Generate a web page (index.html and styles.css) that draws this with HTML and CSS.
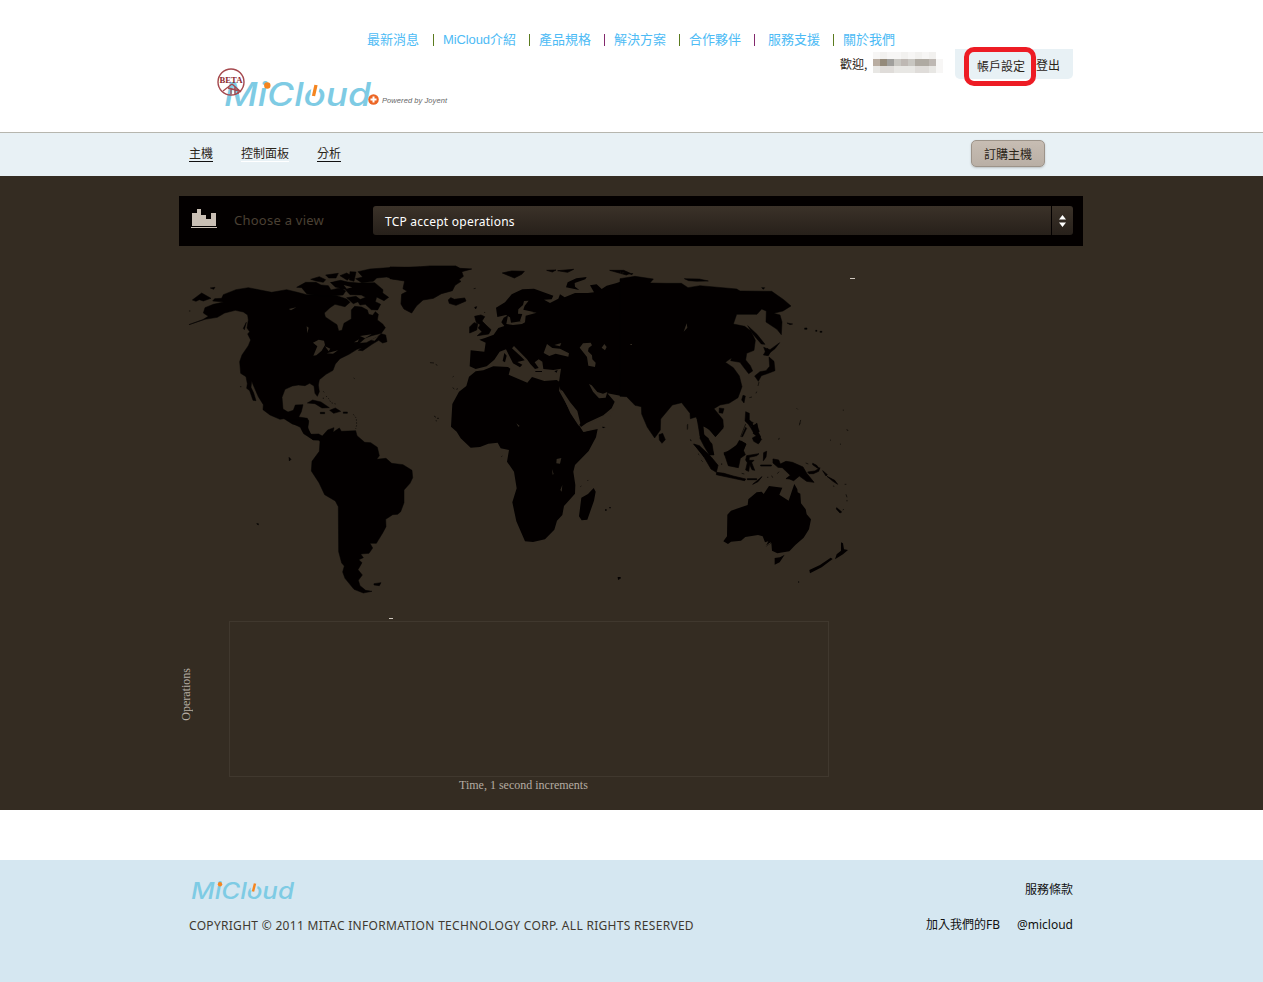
FILE: index.html
```html
<!DOCTYPE html>
<html lang="zh-Hant">
<head>
<meta charset="utf-8">
<title>MiCloud</title>
<link rel="stylesheet" href="styles.css">
</head>
<body>
<header class="header">
  <nav class="topnav">
    <a>最新消息</a><i></i><a class="intro">MiCloud介紹</a><i></i><a>產品規格</a><i class="purple"></i><a>解決方案</a><i></i><a>合作夥伴</a><i class="purple wide"></i><a>服務支援</a><i></i><a>關於我們</a>
  </nav>
  <div class="brand-row">
    <svg class="logo" width="236" height="48" viewBox="214 64 236 48">
      <text class="wordmark" x="224" y="105.500" font-size="32" textLength="147" lengthAdjust="spacingAndGlyphs">MiCloud</text>
      <g fill="none" stroke="#a5484e">
        <circle cx="231" cy="82" r="13" stroke-width="1.400"/>
        <path d="M232 84l-9 7M228 88l12 3M232 84l9 8M231 88v6M235 87v8M238 89v5" stroke-width="1.300"/>
      </g>
      <text x="219.500" y="82.500" font-size="8" font-weight="700" fill="#8c2930" font-family="Liberation Serif, serif" textLength="23" lengthAdjust="spacingAndGlyphs">BETA</text>
      <circle cx="267.300" cy="85.500" r="3.200" fill="#f5851f"/>
      <path d="M312 84L321 84L318 94L310.500 94Z" fill="#fff"/>
      <path d="M316 85L313.500 96" stroke="#f5851f" stroke-width="3.300"/>
      <circle cx="373.500" cy="99.500" r="5.300" fill="#ec6625"/>
      <path d="M370.500 99.500h6M373.500 96.500v6" stroke="#fff" stroke-width="2"/>
      <text x="382" y="103" font-size="7.500" font-style="italic" fill="#666" font-family="Liberation Sans, sans-serif" textLength="65">Powered by Joyent</text>
    </svg>
    <div class="welcome">歡迎,</div>
    <div class="mosaic">
      <b class="m1"></b><b class="m2"></b><b class="m1"></b><b class="m1"></b><b class="m2"></b><b class="m1"></b><b class="m2"></b><b class="m1"></b><b class="m2"></b><b></b>
      <b class="m5"></b><b class="m7"></b><b class="m6"></b><b class="m4"></b><b class="m5l"></b><b class="m4"></b><b class="m8"></b><b class="m8"></b><b class="m5l"></b><b class="m1"></b>
      <b class="m3"></b><b class="m3d"></b><b class="m3d"></b><b class="m3"></b><b class="m3"></b><b class="m3"></b><b class="m3d"></b><b class="m3d"></b><b class="m3"></b><b class="m1"></b>
    </div>
    <div class="account"><a>帳戶設定</a><a class="logout">登出</a><div class="marker"></div></div>
  </div>
</header>
<nav class="mainnav">
  <a class="line">主機</a><a class="line pale">控制面板</a><a class="line">分析</a>
  <button class="order">訂購主機</button>
</nav>
<main class="main">
  <div class="viewbar">
    <svg class="baricon" width="26" height="20" viewBox="0 0 26 20" fill="#c9bfb4" shape-rendering="crispEdges"><path d="M1 4h5V0h4v6h5v4h5V4h5v13H1zM0 18h26v1H0z"/></svg>
    <span class="choose">Choose a view</span>
    <div class="select"><span>TCP accept operations</span>
      <div class="stepper"><svg width="7" height="12" viewBox="0 0 7 12" fill="#fff"><path d="M3.500 0L7 4.500H0zM0 7.500h7L3.500 12z"/></svg></div>
    </div>
  </div>
  <div class="maprow">
    <svg class="map" width="671" height="350" viewBox="179 256 671 350">
      <!-- North America -->
      <g transform="translate(180 255) scale(.33333)">
        <path stroke="#030000" stroke-width="1.500" d="M27 209L68 194 85 184 70 174 75 158 100 148 132 141 98 138 104 131 125 130 130 119 168 104 205 98 240 105 275 112 320 104 352 112 380 119 430 118 470 122 500 132 510 142 495 155 465 148 450 158 433 174 436 186 457 200 471 209 476 228 486 226 492 205 514 192 514 165 524 154 545 156 562 165 566 178 578 181 586 170 595 178 592 195 608 207 616 218 604 235 575 242 556 249 538 265 559 263 592 246 604 236 617 240 621 260 608 264 596 256 576 268 548 287 535 286 546 278 531 283 507 298 480 311 466 327 459 346 438 358 418 374 415 390 418 410 412 424 405 415 402 393 389 385 375 392 355 390 337 393 315 403 306 427 309 462 324 471 340 466 346 450 369 449 364 470 356 486 382 490 386 500 383 522 393 539 408 542 416 540 424 556 400 555 382 540 368 529 362 513 337 507 312 491 300 493 270 480 249 464 250 449 235 425 221 393 215 378 213 397 221 414 228 437 219 436 209 407 200 400 202 386 198 365 182 355 179 320 186 300 205 272 212 255 203 237 209 230 201 219 205 195 203 180 190 171 166 166 134 174 112 187 75 193Z"/>
        <path stroke="#030000" stroke-width="1.500" d="M37 135L65 114 93 130 70 138 58 134 48 139ZM91 99L105 97 101 103ZM199 202L193 224 190 220ZM350 97L377 82 408 82 423 90 445 92 453 105 483 98 497 108 489 120 430 124 380 116 365 98ZM392 73L418 65 437 74 430 82 408 78ZM437 60L475 55 468 69 446 69ZM480 62L500 54 514 62 502 76ZM510 50L528 51 522 79 508 75ZM534 50L570 42 640 37 720 36 720 65 640 72 620 66 590 69 580 79 545 83 527 71 548 66ZM451 82L482 76 503 81 535 84 584 83 609 104 608 114 626 127 612 137 590 126 586 140 602 148 593 165 574 164 556 148 540 150 532 137 557 127 544 120 510 119 495 103 466 96ZM500 128L528 124 544 136 520 146ZM382 444L398 435 423 441 448 458 426 459 405 446ZM449 466L466 459 482 469 461 475ZM421 472h13v4h-13zM490 471h12v4h-12z"/>
        <path d="M430 409l5 6M430 428v5M438 423l8 8 7 12 14 4M520 478l9 12 1 20-3 12M521 369l3 2M180 395h4M27 168h4" fill="none" stroke="#15110c" stroke-width="3" stroke-dasharray="4 5"/>
        <path d="M399 263l17-9 16 3 3 13-10 17-16 14-9 1 12-28zM435 274l16 7-5 8zM440 295l34-9-15 10zM380 214l6 4-4 17zM326 162l23-5-16 9zM522 262l15-9-4 8zM438 73l27 5-15 4zM491 90l26 7-17 4zM540 243l35-5-20 12zM572 255l24-12-12 14z" fill="#342c22"/>
      </g>
      <!-- South America -->
      <g transform="translate(240 420) scale(.33333)">
        <path stroke="#030000" stroke-width="1.500" d="M143 0L205 0 202 20 212 43 236 42 247 48 263 30 282 23 279 37 298 24 304 34 347 32 351 47 374 67 392 68 412 82 418 107 410 118 438 115 455 130 489 134 516 151 518 173 510 190 492 210 492 248 482 275 473 283 458 284 437 298 438 320 428 339 409 370 390 370 398 384 387 400 362 402 370 413 356 419 366 428 354 449 367 465 355 481 360 497 377 511 396 514 370 519 342 508 315 475 308 456 313 438 305 429 296 395 295 260 286 243 254 224 237 188 214 153 216 124 238 94 240 65 232 51 219 59 191 41 181 22 163 13ZM402 491l21-3-5 9-16-2zM147 112l6 6-5 5zM50 311l5 0v4z"/>
      </g>
      <!-- Greenland, Europe, western Asia and Africa -->
      <g transform="translate(390 255) scale(.33333)">
        <path stroke="#030000" stroke-width="2" d="M0 36L55 38 120 33 197 33 210 40 245 42 215 50 220 64 206 75 213 79 195 91 187 107 154 116 130 130 99 135 79 153 65 174 42 162 33 147 35 118 52 109 39 101 44 78 0 71ZM175 135L182 128 193 133 224 129 228 138 198 151 178 145ZM337 54L365 48 403 49 395 58 373 69ZM470 46l28-1-11 6zM503 47l48-4-18 9zM659 46l42 0 20 9-12 5zM254 184L273 180 284 185 276 198 291 213 303 224 296 237 262 242 276 230 265 219 271 209 259 202ZM239 216L252 203 263 206 260 225 239 234ZM254 157l6-2-3 7z"/>
        <path d="M318 158L345 142 365 118 397 103 432 101 490 122 485 133 462 134 480 144 505 131 510 118 524 127 555 114 594 114 612 112 600 91 620 88 635 102 650 92 680 84 720 70 760 70 760 425 695 423 652 415 674 440 665 460 640 481 590 504 573 516 546 474 531 441 511 405 507 381 513 341 490 345 460 342 457 320 446 313 434 322 446 339 435 342 421 327 411 313 372 273 366 280 392 304 404 316 382 321 397 329 390 337 369 325 348 283 329 290 313 314 290 334 257 342 239 334 242 286 283 290 287 263 268 254 285 249 311 239 325 219 343 213 334 202 341 188 354 181 349 207 369 210 396 207 405 202 407 182 440 173 409 169 397 180 392 199 363 203 360 187 348 180 322 186Z"/>
        <path d="M257 349L280 346 310 334 354 336 361 341 356 359 384 371 412 383 426 366 463 378 500 375 512 383 507 407 529 447 548 482 569 514 580 531 623 522 618 547 596 588 555 630 550 650 556 690 555 716 522 753 517 780 501 797 493 824 465 853 429 861 405 859 379 799 367 742 380 700 372 650 351 620 357 585 332 580 323 563 295 566 270 576 242 578 212 550 200 530 183 515 187 447 207 410 229 393 237 365ZM611 699L617 710 612 737 592 794 575 796 567 784 574 728 594 717ZM528 97L533 82 559 70 590 66 586 73 554 84 555 95 568 105ZM343 294l7 8-5 20-7-4zM436 348h20v3h-20zM493 349l10-4-3 8zM683 966h9v5h-4v3h-4zM636 515l11 1-8 4zM645 763h5v4h-5zM658 756h4v4h-4z"/>
        <path stroke="#15110c" stroke-width="3" d="M120 323l12 1M137 328l5 3M188 398l5 4M199 403l5-2M132 483l6 4M141 490l6 0M137 497l4 1M188 366l3-2M251 101l6-1M284 171v3M571 695l3-2M592 678l3-3M334 605l3-2"/>
        <path d="M461 294L471 267 487 279 510 281 537 295 535 305 497 296 478 303ZM493 270l21-6-4 10zM569 278L579 265 602 263 606 271 596 279 594 289 606 301 607 313 617 323 615 336 595 332 591 306ZM635 278l8-11 7 9-5 10zM597 387L605 391 622 411 639 416 652 411 647 428 627 430 609 410ZM385 163L399 150 402 138 416 137 404 152 400 164 431 171 404 181 402 201 390 197 397 177 384 176ZM500 612l14-3-4 17-11-1zM379 505l10 8-4 2zM486 642l5 15-3 2zM517 690l-2 20-4-5z" fill="#342c22"/>
        <path d="M510 403L518 408 540 441 562 468 571 505 566 512 541 474 526 440ZM573 519L640 484 672 462 660 485 622 519 582 530Z" fill="#342c22"/>
      </g>
      <!-- Eastern Asia -->
      <g transform="translate(620 255) scale(.33333)">
        <path stroke="#030000" stroke-width="1.500" d="M0 71L45 64 100 72 90 84 140 85 184 85 204 98 240 92 350 102 360 108 455 109 491 134 513 153 489 168 461 175 480 180 486 201 484 239 471 223 438 201 439 168 425 162 411 178 350 178 340 207 374 214 392 227 406 256 402 286 380 295 377 315 391 332 398 348 386 356 371 337 360 322 332 317 335 308 316 322 340 338 358 363 366 395 354 428 327 445 300 450 282 461 308 493 309 520 286 545 268 524 248 511 252 540 265 550 282 600 268 600 253 575 240 550 241 515 228 486 211 491 210 475 185 443 157 450 122 492 121 525 104 549 82 517 65 477 64 455 45 451 20 425 0 424ZM117 539l11-4 8 19-10 11-8-10zM383 212L411 238 435 268 424 267 400 239ZM431 277L450 284 479 263 465 281 440 301ZM430 300L442 280 452 290 445 302ZM447 306L462 319 465 347 445 355 424 362 415 379 404 363 420 350 438 347 449 334ZM369 421l7 2-4 21-7-9zM298 459l14 2-4 14-11-2zM377 470l11 5 0 22 12 6-9 10 14 6 4-15 9 26-17 4-8-14-8-12-10-10zM397 549l16-9 12 13-10 14-14-8zM377 517l-13 28 4 0 12-25zM313 596l37-25 8-15 20 11-14 33-51 0zM222 568l25 15 24 22-20 0zM193 71l45 1 27 6-35 1-24-2zM425 98l9 0-4 5zM501 204l17 3-8 2zM554 219h7v4h-7zM587 226h4v3h-4zM600 229h6v3h-6z"/>
        <path stroke="#15110c" stroke-width="3" d="M202 510v14M210 554l4 2M417 381l-3 12M410 410l-2 5M388 428l8-2M530 460l3 3M542 495l-4 16M475 552l3-2M681 523l3 4M660 567l3 1M630 556l3-1M670 464v3"/>
        <path d="M191 230l9-25 2 13zM0 50l14 3-13 4zM31 267h5v3h-5z" fill="#342c22"/>
        <path d="M0 50l15 3-13 4zM17 54l23 1-4 5z"/>
      </g>
      <!-- Indonesia, Australia, New Zealand -->
      <g transform="translate(660 420) scale(.33333)">
        <path stroke="#030000" stroke-width="2" d="M112 0L188 0 190 21 167 49 146 23 129 18 130 42 156 72 161 103 145 93 134 65 120 47ZM101 72L118 77 153 110 174 136 169 157 153 147 128 104ZM170 157L192 160 219 168 257 177 254 182 220 175 169 164ZM192 98L213 92 243 63 258 72 250 91 256 104 241 115 235 143 205 137ZM260 107L297 101 290 107 268 112 267 121 282 121 275 128 284 151 276 149 269 133 266 154 257 150 262 128 257 120ZM339 117L356 120 361 132 378 124 397 127 429 141 440 160 462 187 440 184 418 168 401 182 388 177 378 176 391 166 367 143 354 142 339 129ZM443 156L465 153 480 143 476 154 460 161 447 161ZM458 130l12 6 8 10-6-2-14-10zM262 176h28v3h-28zM278 193l28-23-12 15zM302 135h32v3h-32zM311 98l9-4-2 17-8 11zM488 152l14 12-4 4zM501 169l23 12 9 12-14-9zM530 263l15 13-5 3-11-12z"/>
        <path stroke="#15110c" stroke-width="3" d="M114 101l4 4M124 121l4 4M560 30l3 2M558 223l3 9M561 240v4M554 193h5M548 270l4-2M519 198l4 1M83 12v14M90 60l4 2M355 58l4-2M418 12l3-3M185 130v5M245 160l8 2M321 172h4M335 167l3 6M352 161l5-6M273 598h4M437 129l8 3M257 12l-15 38"/>
        <path d="M190 364L201 349 202 284 213 272 263 255 265 238 290 217 305 215 311 222 327 198 367 203 358 224 386 242 396 212 403 192 412 208 413 217 421 221 423 250 437 268 440 283 453 298 447 328 431 353 406 375 388 394 352 400 336 392 334 369 316 381 325 364 315 367 308 349 294 345 256 351 243 362 213 365 204 372ZM344 414L360 412 374 404 359 427 344 434ZM543 367L549 370 552 388 564 390 549 403 525 418 530 403 543 392ZM448 450L480 435 512 413 518 417 485 442 450 460ZM414 484l5 2-5 2zM260 0l10 0 10 15 12-5 3 25 8 15-5 19-9-4 2-15-13-10 7-7-11-14z"/>
        <path d="M314 381l18-13" stroke="#342c22" stroke-width="3"/>
      </g>
    </svg>
    <i class="tick"></i>
  </div>
  <div class="charttick"><i></i></div>
  <div class="chart"><div class="ylabel"><span>Operations</span></div><div class="plot"></div></div>
  <div class="xlabel">Time, 1 second increments</div>
</main>
<footer class="footer">
  <div class="frow">
    <svg class="flogo" width="108" height="22" viewBox="0 0 108 22">
      <text class="wordmark" x="1" y="18.800" font-size="23" textLength="103" lengthAdjust="spacingAndGlyphs">MiCloud</text>
      <circle cx="30" cy="4.200" r="2.200" fill="#f5851f"/>
      <path d="M61.500 3h7l-2 7.500h-6z" fill="#d5e7f1"/><path d="M65 3.500l-2 8" stroke="#f5851f" stroke-width="2.400"/>
    </svg>
    <a>服務條款</a>
  </div>
  <div class="frow second"><span class="copy">COPYRIGHT © 2011 MITAC INFORMATION TECHNOLOGY CORP. ALL RIGHTS RESERVED</span><a>加入我們的FB</a><a class="at">@micloud</a></div>
</footer>
</body>
</html>
```
FILE: styles.css
```css
* { box-sizing: border-box; }
body { margin: 0; width: 1263px; height: 982px; background: #fff; color: #2b2418; font: 12px/16px "Noto Sans", "Noto Sans CJK TC", sans-serif; overflow: hidden; }
.header { height: 132px; padding-top: 32px; }
.topnav { display: flex; align-items: center; height: 16px; margin-left: 367px; font: 13px/16px "Liberation Sans", "Noto Sans CJK TC", sans-serif; color: #4dbbf5; white-space: nowrap; }
.topnav .intro { width: 73px; letter-spacing: -.1px; }
.topnav i { width: 1px; height: 12px; margin: 0 9px 0 13px; background: #5b7b1e; }
.topnav i:first-of-type { margin-left: 14px; }
.topnav i.purple { background: #83286c; }
.topnav i.wide { margin-right: 13px; }
.brand-row { display: flex; align-items: flex-start; }
.logo { margin: 16px 0 0 214px; flex: none; overflow: visible; }
.wordmark { font-family: Inter, sans-serif; font-style: italic; font-weight: 500; fill: #7ecbe4; }
.welcome { width: 33px; margin: 8px 0 0 390px; font-family: "Noto Sans CJK TC", sans-serif; }
.mosaic { display: grid; grid-template-columns: repeat(10, 7px); grid-auto-rows: 7px; margin-top: 4px; }
.m1 { background: #f7f6f5; } .m2 { background: #f2f1ef; } .m3 { background: #e8e7e4; } .m3d { background: #dfdcd9; }
.m4 { background: #c8c6c1; } .m5 { background: #b9ada1; } .m5l { background: #beb8b3; } .m6 { background: #a09f9c; } .m7 { background: #948a7a; } .m8 { background: #afaaa2; }
.account { position: relative; display: flex; width: 118px; height: 30px; margin: 1px 0 0 12px; padding: 9px 0 0 22px; border-radius: 0 0 5px 5px; background: #e8f1f5; white-space: nowrap; font-family: "Noto Sans CJK TC", sans-serif; }
.logout { margin: -1px 0 0 11px; }
.marker { position: absolute; left: 9px; top: -2px; width: 72px; height: 39px; border: 5px solid #ed1c24; border-radius: 10px; }
.mainnav { display: flex; height: 44px; padding: 7px 0 0 189px; border-top: 1px solid #b6b6ae; background: #e8f1f5; font-family: "Noto Sans CJK TC", sans-serif; }
.line { height: 22px; margin-right: 28px; padding-top: 5px; border-bottom: 1px solid #111; }
.line.pale { border-color: #fff; }
.order { width: 74px; height: 27px; margin-left: 602px; padding: 0; border: 1px solid #9c9389; border-radius: 5px; background: linear-gradient(#c7bdb3, #b9afa5); box-shadow: 0 1px 2px #8887; color: #2b2418; font: 12px/24px "Noto Sans CJK TC", sans-serif; }
.main { height: 634px; padding: 20px 0 0 179px; background: #342c22; }
.viewbar { display: flex; width: 904px; height: 50px; background: #030000; }
.baricon { margin: 13px 17px 0 12px; }
.choose { width: 139px; margin-top: 16px; color: #4b4034; font-size: 13px; letter-spacing: .25px; white-space: nowrap; }
.select { display: flex; justify-content: space-between; width: 700px; height: 29px; margin-top: 10px; padding-left: 12px; border-radius: 3px; background: linear-gradient(#3b3229, #27201a); color: #fff; line-height: 31px; letter-spacing: .23px; }
.stepper { display: flex; align-items: center; justify-content: center; width: 22px; border-left: 1px solid #030000; }
.maprow { display: flex; height: 350px; margin-top: 10px; }
.map { fill: #030000; }
.tick { width: 5px; height: 1px; margin-top: 22px; background: #d0c9bf; }
.charttick { height: 15px; padding: 12px 0 0 210px; }
.charttick i { display: block; width: 4px; height: 1px; background: #d0c9bf; }
.chart { display: flex; height: 156px; }
.ylabel { display: flex; align-items: center; width: 50px; padding: 0 0 10px 0; color: #b5ada3; font: 12px/14px "Liberation Serif", serif; }
.ylabel span { writing-mode: vertical-rl; transform: rotate(180deg); }
.plot { width: 600px; border: 1px solid #40382e; }
.xlabel { margin: 0 0 0 280px; color: #b5ada3; font: 12px/16px "Liberation Serif", serif; }
.footer { height: 122px; margin-top: 50px; padding: 20px 190px 0 189px; background: #d5e7f1; color: #111; }
.frow { display: flex; justify-content: space-between; height: 22px; line-height: 20px; }
.second { height: 20px; margin-top: 13px; }
.flogo { margin-left: 1px; overflow: visible; }
.copy { margin: 1px auto 0 0; color: #40392f; white-space: nowrap; letter-spacing: .3px; }
.at { margin-left: 17px; }
```
